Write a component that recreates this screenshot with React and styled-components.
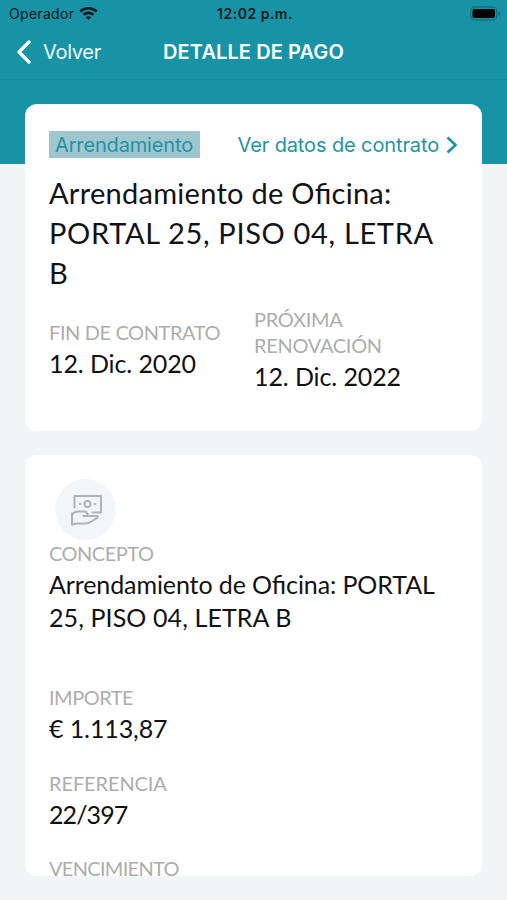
import React from "react";
import styled, { createGlobalStyle } from "styled-components";

const GlobalStyle = createGlobalStyle`
  * {
    box-sizing: border-box;
  }
  body {
    margin: 0;
    background: #f2f4f6;
    overflow: hidden;
  }
`;

const Screen = styled.div`
  width: 100%;
  height: 100vh;
  display: flex;
  flex-direction: column;
  overflow: hidden;
  font-family: Lato, "Noto Sans", sans-serif;
  font-feature-settings: "liga" 1;
  color: #111214;
  background: linear-gradient(#1793a5 0 164px, #f2f4f6 164px);
`;

const StatusBar = styled.div`
  height: 27px;
  flex: none;
  display: grid;
  grid-template-columns: 1fr auto 1fr;
  align-items: center;
  padding: 0 6px 0 9px;
  font-family: Inter, sans-serif;
  color: #06191c;
`;

const Carrier = styled.div`
  display: flex;
  align-items: center;
  gap: 5px;
  font-size: 14px;
  letter-spacing: 0.3px;
`;

const Clock = styled.div`
  font-size: 14px;
  font-weight: 600;
  letter-spacing: 0.5px;
`;

const Battery = styled.svg`
  justify-self: end;
`;

const NavBar = styled.div`
  height: 53px;
  flex: none;
  display: grid;
  grid-template-columns: 1fr auto 1fr;
  align-items: center;
  padding: 0 16px 2px;
  border-bottom: 1px solid #148a9b;
  font-family: Inter, sans-serif;
  color: #fff;
`;

const BackButton = styled.button`
  display: flex;
  align-items: center;
  gap: 11px;
  padding: 0;
  border: none;
  background: none;
  color: #f1fbfc;
  font-family: inherit;
  font-size: 20px;
  letter-spacing: -0.3px;
`;

const NavTitle = styled.div`
  font-size: 20px;
  font-weight: 600;
  letter-spacing: 0.1px;
`;

const Content = styled.div`
  display: flex;
  flex-direction: column;
  gap: 24px;
  padding: 24px 25px 24px;
  flex: 1;
  min-height: 0;
`;

const Card = styled.div`
  padding: 24px;
  border-radius: 12px;
  background: #fff;
  overflow: hidden;
  ${(p) => (p.$fill ? "flex: 1; min-height: 0;" : "flex: none; height: 327px;")}
`;

const CardTop = styled.div`
  display: flex;
  align-items: center;
  justify-content: space-between;
  height: 32px;
  font-family: Inter, sans-serif;
  font-size: 20px;
  color: #1f93a4;
`;

const Tag = styled.span`
  height: 27px;
  padding: 0 7px 0 6px;
  line-height: 28px;
  letter-spacing: -0.15px;
  white-space: nowrap;
  background: #9fc5cf;
`;

const ContractLink = styled.a`
  display: flex;
  align-items: center;
  gap: 7px;
  padding-top: 1px;
  letter-spacing: -0.12px;
  white-space: nowrap;
`;

const Title = styled.h1`
  margin: 13px 0 0;
  font-size: 29px;
  font-weight: 400;
  line-height: 40px;
`;

const Dates = styled.div`
  display: grid;
  grid-template-columns: 205px 1fr;
  align-items: center;
  margin-top: 13px;
`;

const Field = styled.div`
  margin-top: ${(p) => p.$top || 0}px;
`;

const Label = styled.div`
  font-size: 20px;
  line-height: 26px;
  color: #adadad;
  letter-spacing: ${(p) => p.$track || 0}px;
`;

const Value = styled.div`
  padding-top: 2px;
  font-size: 25px;
  line-height: 33px;
  letter-spacing: ${(p) => p.$track || 0}px;
`;

const Line = styled.span`
  display: block;
  white-space: nowrap;
  letter-spacing: ${(p) => p.$track || 0}px;
`;

const IconCircle = styled.div`
  width: 61px;
  height: 61px;
  margin-left: 6px;
  display: flex;
  align-items: center;
  justify-content: center;
  border-radius: 50%;
  background: #f3f6f8;
`;

const WifiIcon = () => (
  <svg width="19" height="14" viewBox="0 0 19 14" fill="#06191c">
    <path d="M9.5 0C6 0 2.800 1.300.4 3.600l1.800 1.900a10.500 10.500 0 0 1 14.600 0l1.800-1.900C16.200 1.300 13 0 9.500 0z" />
    <path d="M9.500 4.600c-2.300 0-4.400.9-5.900 2.300l1.900 1.900a5.800 5.800 0 0 1 8 0l1.900-1.900a8.600 8.600 0 0 0-5.900-2.300z" />
    <path d="M9.500 9.200c-1.100 0-2 .4-2.700 1l2.700 2.900 2.700-2.900c-.7-.6-1.600-1-2.700-1z" />
  </svg>
);

const MoneyHandIcon = () => (
  <svg
    width="34"
    height="34"
    viewBox="0 0 34 34"
    fill="none"
    stroke="#b0b3b5"
    strokeWidth="2"
    strokeLinejoin="round"
  >
    <path d="M5.500 15V3H32v16.500h-9.500" />
    <circle cx="18.500" cy="11" r="3" />
    <path d="M10 11h2.200M25 11h2.200" />
    <path d="M3 19.500V32.500" />
    <path d="M3 22c1.500-2.300 3.700-3.500 6.500-3.500h6c2.300 0 3.200 1.800 3.200 4.500H13.500" />
    <path d="M18.700 23H27c2 0 2.400 1.200.8 2.200L21.500 29c-1.500 1-3 1.500-4.500 1.500H8.500c-2.500 0-3.500.3-5.500 1.200" />
  </svg>
);

const App = () => {
  return (
    <Screen>
      <GlobalStyle />
      <StatusBar>
        <Carrier>
          Operador
          <WifiIcon />
        </Carrier>
        <Clock>12:02 p.m.</Clock>
        <Battery width="31" height="16" viewBox="0 0 31 16">
          <rect x="0.800" y="1" width="26" height="13" rx="4" fill="none" stroke="#117482" strokeWidth="1.300" />
          <rect x="2.500" y="3" width="22.500" height="9" rx="2" fill="#000" />
          <path d="M28.500 5.500c2 .5 2 4 0 4.500z" fill="#117482" />
        </Battery>
      </StatusBar>
      <NavBar>
        <BackButton>
          <svg width="16" height="24" viewBox="0 0 16 24" fill="none" stroke="#fff" strokeWidth="3.200">
            <path d="M13 2L3 12l10 10" strokeLinecap="round" strokeLinejoin="round" />
          </svg>
          Volver
        </BackButton>
        <NavTitle>DETALLE DE PAGO</NavTitle>
      </NavBar>
      <Content>
        <Card>
          <CardTop>
            <Tag>Arrendamiento</Tag>
            <ContractLink>
              Ver datos de contrato
              <svg width="12" height="18" viewBox="0 0 12 18" fill="none" stroke="#1f93a4" strokeWidth="2.600">
                <path d="M1.500 1.500L9.500 9l-8 7.500" />
              </svg>
            </ContractLink>
          </CardTop>
          <Title>
            <Line $track={0.28}>Arrendamiento de Oficina:</Line>
            <Line $track={0.67}>PORTAL 25, PISO 04, LETRA</Line>
            <Line>B</Line>
          </Title>
          <Dates>
            <Field>
              <Label $track={-0.4}>FIN DE CONTRATO</Label>
              <Value $track={-0.1}>12. Dic. 2020</Value>
            </Field>
            <Field>
              <Label $track={-0.3}>
                PRÓXIMA
                <br />
                RENOVACIÓN
              </Label>
              <Value $track={-0.1}>12. Dic. 2022</Value>
            </Field>
          </Dates>
        </Card>
        <Card $fill>
          <IconCircle>
            <MoneyHandIcon />
          </IconCircle>
          <Field>
            <Label $track={-0.5}>CONCEPTO</Label>
            <Value>
              <Line $track={-0.1}>Arrendamiento de Oficina: PORTAL</Line>
              <Line $track={0.1}>25, PISO 04, LETRA B</Line>
            </Value>
          </Field>
          <Field $top={50}>
            <Label $track={-0.5}>IMPORTE</Label>
            <Value $track={-0.1}>€ 1.113,87</Value>
          </Field>
          <Field $top={25}>
            <Label $track={-0.1}>REFERENCIA</Label>
            <Value $track={-0.9}>22/397</Value>
          </Field>
          <Field $top={24}>
            <Label $track={-0.7}>VENCIMIENTO</Label>
          </Field>
        </Card>
      </Content>
    </Screen>
  );
};

export default App;
